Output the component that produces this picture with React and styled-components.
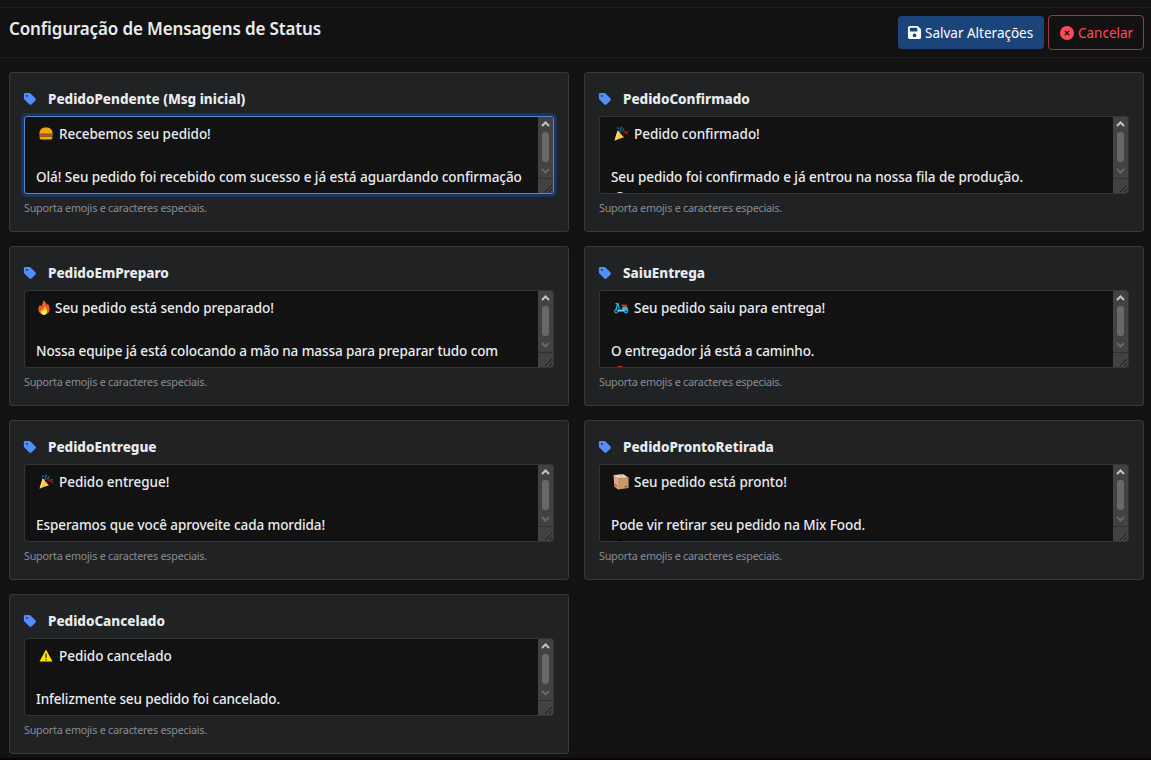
import styled, { createGlobalStyle } from "styled-components";
import { FaCircleXmark, FaFloppyDisk, FaTag } from "react-icons/fa6";

const Burger = () => (
  <svg width="14" height="13" viewBox="0 0 14 13">
    <path d="M0.500 6.500C0.500 2.500 3 0.600 7 0.600S13.500 2.500 13.500 6.500z" fill="#f2a600" />
    <rect x="0.300" y="6" width="13.400" height="1.300" fill="#9a8a12" />
    <rect x="0.300" y="7.200" width="13.400" height="2" fill="#a35a34" />
    <path d="M0.600 9.600h12.800v1.200q0 1.600-1.600 1.600H2.200Q0.600 12.400 0.600 10.800z" fill="#f2a600" />
  </svg>
);

const Popper = () => (
  <svg width="15" height="15" viewBox="0 0 15 15">
    <path d="M3.600 4.500L10 11.200 0.600 14.600z" fill="#ffc83d" />
    <path d="M3.600 4.500L5.600 6.600 2.600 13.800 0.600 14.600z" fill="#ffd76a" />
    <path d="M3 1.500l2 1.500M7.500 0.500l-1 3.500M5 4.500l2.500 1.500M8.500 5l1.500-2.500" stroke="#1a7398" strokeWidth="1.300" />
    <path d="M9.500 7.500l1-2 1.500 1 2-1.500M11.500 7l2.500 1.500" stroke="#8c2019" strokeWidth="1.500" fill="none" />
  </svg>
);

const Fire = () => (
  <svg width="12" height="15" viewBox="0 0 12 15">
    <path d="M5 0.300C8 2 8.500 3.500 8.700 5.200L9.800 3.800C11.400 6 11.600 8 11.600 9.500 11.600 12.500 9.200 14.700 6 14.700S0.400 12.500 0.400 9.300C0.400 7.200 1.400 5.800 2 4.800L3.200 6.400C4.300 4.500 5.300 2.800 5 0.300z" fill="#f8571c" />
    <path d="M6.200 6.500C8.500 8.500 9.200 9.500 9.200 11.200 9.200 13.400 7.800 14.700 6 14.700S2.600 13.400 2.600 11.300L4 9.500 5 10.600z" fill="#ffd12e" />
    <path d="M6 10.200c1.300 1 1.700 2 1.700 2.800 0 1-.8 1.700-1.700 1.700s-1.700-.7-1.700-1.700S5 11.200 6 10.200z" fill="#fff4a0" />
  </svg>
);

const Scooter = () => (
  <svg width="15" height="12" viewBox="0 0 15 12">
    <path d="M4.500 7.500h3.300L8.500 5h4.800l1 3.500H4.500z" fill="#27b8e8" />
    <path d="M1.500 1.500h2.500l1.300 6M3.300 2L2 8" stroke="#27b8e8" strokeWidth="1.200" fill="none" />
    <path d="M7 2.500l5.500 0.300 1 2H9z" fill="#c94f24" />
    <circle cx="2.300" cy="9.300" r="1.700" fill="#0c2c3c" stroke="#35bfea" />
    <circle cx="12" cy="9.300" r="1.700" fill="#0c5878" stroke="#35bfea" />
    <path d="M3.800 8.800h6.500" stroke="#72dcf6" strokeWidth="1.500" />
  </svg>
);

const Box = () => (
  <svg width="16" height="16" viewBox="0 0 16 16">
    <path d="M0.500 1L5 4.200V15.500L1.300 12.500z" fill="#e3a583" />
    <path d="M0.500 1L10.500 0.300 15.500 3.500 5 4.500z" fill="#f2cfb8" />
    <path d="M5 4.400L15.600 3.400V14L5 15.600z" fill="#c99a68" />
    <path d="M5 0.700L7.300 0.500 11.500 3.900 9 4.100z" fill="#d9c2b4" />
    <path d="M1.800 9.500l2 1.500v2l-2-1.500z" fill="#e0344c" />
    <path d="M11.500 12.800l2.800-.4" stroke="#7b5a39" strokeWidth="1.200" />
  </svg>
);

const Warning = () => (
  <svg width="14" height="13" viewBox="0 0 14 13">
    <path d="M7 0.600L13.500 12.500H0.500z" fill="#ffe600" />
    <path d="M7 4.500v4.500M7 10v1.500" stroke="#3a3500" strokeWidth="1.300" />
  </svg>
);

const MESSAGES = [
  {
    key: "PedidoPendente (Msg inicial)",
    Emoji: Burger,
    title: "Recebemos seu pedido!",
    body: "Olá! Seu pedido foi recebido com sucesso e já está aguardando confirmação",
    spacing: -0.055,
    focused: true,
  },
  {
    key: "PedidoConfirmado",
    Emoji: Popper,
    title: "Pedido confirmado!",
    body: "Seu pedido foi confirmado e já entrou na nossa fila de produção.",
    spacing: -0.06,
    peek: "#e8e8e8",
  },
  {
    key: "PedidoEmPreparo",
    Emoji: Fire,
    title: "Seu pedido está sendo preparado!",
    body: "Nossa equipe já está colocando a mão na massa para preparar tudo com",
    spacing: -0.095,
    narrow: true,
  },
  {
    key: "SaiuEntrega",
    Emoji: Scooter,
    title: "Seu pedido saiu para entrega!",
    body: "O entregador já está a caminho.",
    spacing: -0.12,
    peek: "#d83b20",
  },
  {
    key: "PedidoEntregue",
    Emoji: Popper,
    title: "Pedido entregue!",
    body: "Esperamos que você aproveite cada mordida!",
    spacing: -0.08,
  },
  {
    key: "PedidoProntoRetirada",
    Emoji: Box,
    title: "Seu pedido está pronto!",
    body: "Pode vir retirar seu pedido na Mix Food.",
    spacing: -0.08,
    peek: "#000000",
  },
  {
    key: "PedidoCancelado",
    Emoji: Warning,
    title: "Pedido cancelado",
    body: "Infelizmente seu pedido foi cancelado.",
    spacing: -0.12,
  },
];

const ScrollBar = () => (
  <Track>
    <svg width="15" height="76" viewBox="0 0 15 76" fill="none">
      <path d="M4 9L7.500 5.500 11 9" stroke="#c4c4c4" strokeWidth="2" />
      <rect x="4" y="15" width="7" height="30" rx="3" fill="#686868" />
      <path d="M4 52L7.500 55.500 11 52" stroke="#686868" strokeWidth="2" />
      <path d="M0 61.500h15" stroke="#303030" />
      <path d="M7 75L14 68M11 75L14 72" stroke="#1c1c1c" />
    </svg>
  </Track>
);

const App = () => {
  return (
    <Page>
      <GlobalStyle />
      <Header>
        <Title>Configuração de Mensagens de Status</Title>
        <Actions>
          <SaveButton>
            <FaFloppyDisk size={15} />
            Salvar Alterações
          </SaveButton>
          <CancelButton>
            <FaCircleXmark size={14} />
            Cancelar
          </CancelButton>
        </Actions>
      </Header>
      <Grid>
        {MESSAGES.map((message) => (
          <Card key={message.key}>
            <Label>
              <FaTag size={14} color="#548dff" />
              {message.key}
            </Label>
            <Field $focused={message.focused}>
              <Lines>
                <Line $spacing={-0.04}>
                  <EmojiSlot $narrow={message.narrow}>
                    <message.Emoji />
                  </EmojiSlot>
                  {message.title}
                </Line>
                <Line />
                <Line $spacing={message.spacing}>{message.body}</Line>
                {message.peek && <Peek $color={message.peek} />}
              </Lines>
              <ScrollBar />
            </Field>
            <Help>Suporta emojis e caracteres especiais.</Help>
          </Card>
        ))}
      </Grid>
    </Page>
  );
};

const GlobalStyle = createGlobalStyle`
  * {
    box-sizing: border-box;
  }
  body {
    margin: 0;
    background: #121212;
    color: #e9ecef;
    font-family: "Noto Sans", "Open Sans", sans-serif;
    overflow: hidden;
  }
`;

const Page = styled.div`
  height: 760px;
  padding-top: 7px;
  border-bottom: 2px solid #0b0406;
`;

const Header = styled.header`
  display: flex;
  justify-content: space-between;
  height: 51px;
  padding: 7px 7px 0 9px;
  border-top: 1px solid #1c1c1d;
  border-bottom: 1px solid #1c1c1d;
`;

const Title = styled.h1`
  margin: 0;
  font-size: 17px;
  font-weight: 600;
  letter-spacing: -0.13px;
  line-height: 27px;
`;

const Actions = styled.div`
  display: flex;
  align-items: center;
  gap: 4px;
  height: 35px;
`;

const Button = styled.button`
  display: flex;
  align-items: center;
  border-radius: 4px;
  font: 400 13.5px "Noto Sans", sans-serif;
  white-space: nowrap;
`;

const SaveButton = styled(Button)`
  gap: 3px;
  width: 146px;
  height: 33px;
  padding: 0 9px;
  border: 0;
  background: #1b447a;
  color: #fff;
`;

const CancelButton = styled(Button)`
  gap: 4px;
  width: 96px;
  height: 35px;
  padding: 0 9px 0 11px;
  border: 1px solid #a8353e;
  background: transparent;
  color: #ff4d57;
`;

const Grid = styled.main`
  display: grid;
  grid-template-columns: 560px 560px;
  grid-auto-rows: 160px;
  gap: 14px 15px;
  padding: 14px 0 0 9px;
`;

const Card = styled.section`
  padding: 14px;
  border: 1px solid #37383a;
  border-radius: 3px;
  background: #202224;
`;

const Label = styled.div`
  display: flex;
  align-items: center;
  gap: 11px;
  height: 24px;
  margin-left: -1px;
  font-size: 13.5px;
  font-weight: 800;
  letter-spacing: -0.02px;
`;

const Field = styled.div`
  display: flex;
  width: 530px;
  height: 78px;
  margin-top: 5px;
  border: 1px solid ${({ $focused }) => ($focused ? "#5c85c8" : "#333537")};
  border-radius: 3px;
  background: #121212;
  box-shadow: ${({ $focused }) => ($focused ? "0 0 0 3px #18355f" : "none")};
  overflow: hidden;
`;

const Lines = styled.div`
  flex: 1;
  padding: 6px 0 0 11px;
  overflow: hidden;
`;

const Line = styled.div`
  display: flex;
  align-items: center;
  height: 21.5px;
  font-size: 13.5px;
  font-weight: 500;
  letter-spacing: ${({ $spacing }) => $spacing || 0}px;
  white-space: nowrap;
`;

const EmojiSlot = styled.span`
  display: flex;
  justify-content: center;
  width: ${({ $narrow }) => ($narrow ? "16px" : "20px")};
  margin-right: 3px;
`;

const Peek = styled.div`
  width: 12px;
  height: 12px;
  margin: 4px 0 0 3px;
  border-radius: 50%;
  background: ${({ $color }) => $color};
`;

const Track = styled.div`
  width: 15px;
  height: 76px;
  background: #424242;
`;

const Help = styled.p`
  margin: 5px 0 0;
  color: #888d93;
  font-size: 10.8px;
  letter-spacing: -0.24px;
  line-height: 18px;
`;

export default App;
